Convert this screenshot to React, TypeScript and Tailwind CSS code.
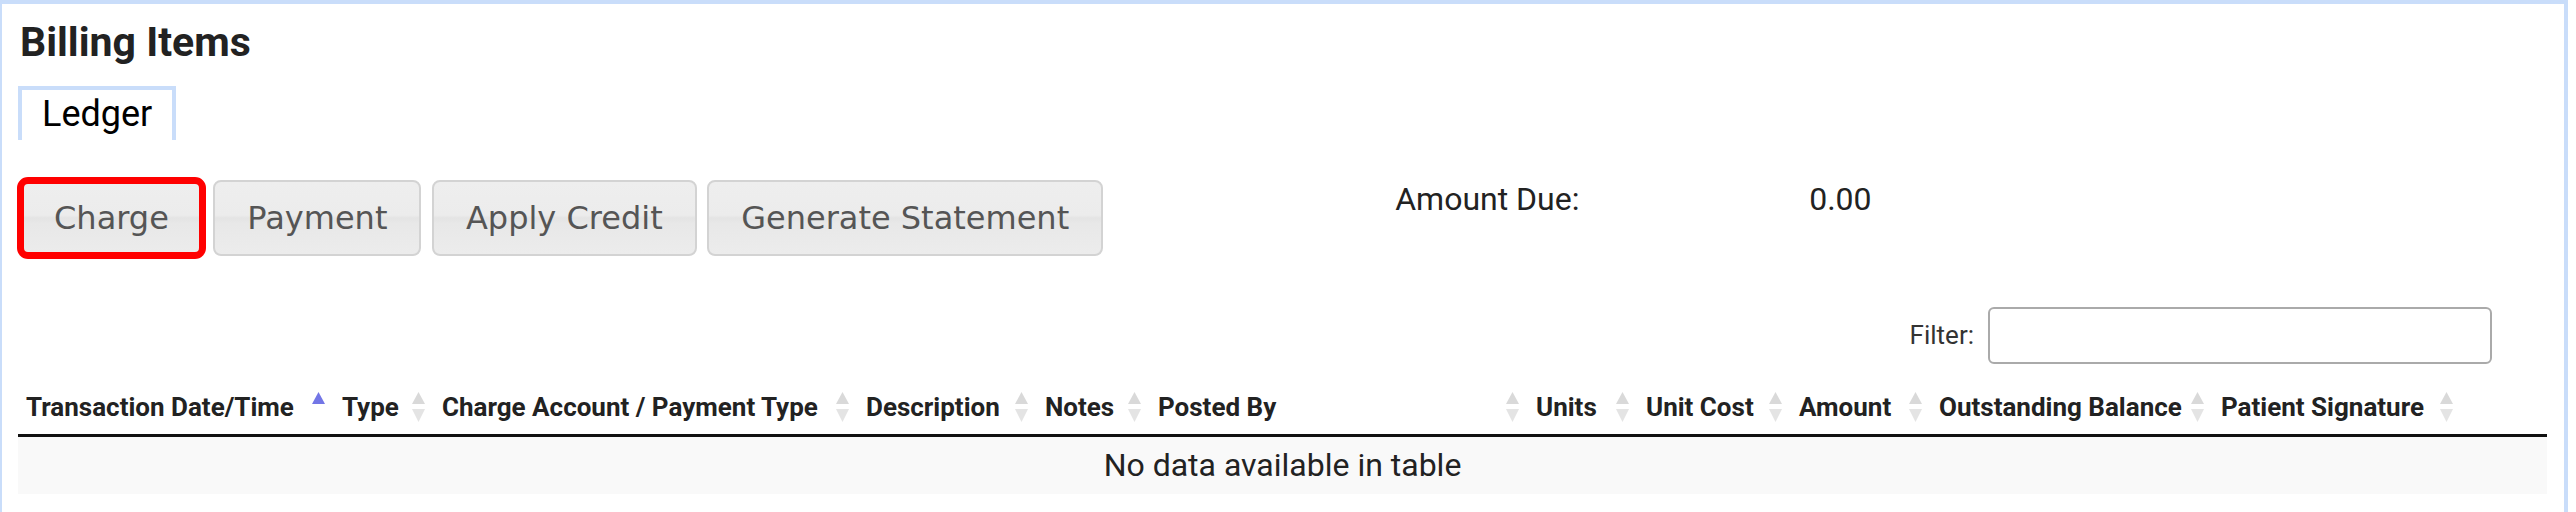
import React from "react";

type Column = {
  label: string;
  width: string;
  sort?: "asc" | "both";
};

const columns: Column[] = [
  { label: "Transaction Date/Time", width: "w-[316px]", sort: "asc" },
  { label: "Type", width: "w-[100px]", sort: "both" },
  { label: "Charge Account / Payment Type", width: "w-[424px]", sort: "both" },
  { label: "Description", width: "w-[179px]", sort: "both" },
  { label: "Notes", width: "w-[113px]", sort: "both" },
  { label: "Posted By", width: "w-[378px]", sort: "both" },
  { label: "Units", width: "w-[110px]", sort: "both" },
  { label: "Unit Cost", width: "w-[153px]", sort: "both" },
  { label: "Amount", width: "w-[140px]", sort: "both" },
  { label: "Outstanding Balance", width: "w-[282px]", sort: "both" },
  { label: "Patient Signature", width: "w-[249px]", sort: "both" },
  { label: "", width: "w-[85px]" },
];

const buttons = ["Charge", "Payment", "Apply Credit", "Generate Statement"];

const SortIcon = ({ dir }: { dir: "asc" | "both" }) => (
  <svg
    width="13"
    height="30"
    viewBox="0 0 13 30"
    className="absolute right-[9px] top-[20px]"
  >
    <path d="M6.5 0 L13 12 L0 12 Z" fill={dir === "asc" ? "#7376e6" : "#d9d9d9"} />
    {dir === "both" && <path d="M0 17 L13 17 L6.5 30 Z" fill="#e4e4e4" />}
  </svg>
);

const App = () => {
  return (
    <div className="w-[2568px] h-[512px] overflow-hidden bg-white border-t-4 border-l-2 border-r-4 border-[#c9ddfa] font-['Roboto',sans-serif] text-[#222]">
      <div className="pl-[16px] pr-[17px]">
        <h1 className="mt-[15px] ml-[2px] text-[41px] leading-[46px] font-bold">
          Billing Items
        </h1>

        <div className="mt-[21px] flex">
          <div className="border-t-4 border-x-4 border-[#c9ddfa] px-[20px] pt-[4px] pb-[6px] text-[36px] leading-[40px] text-black">
            Ledger
          </div>
        </div>

        <div className="mt-[40px] flex items-start">
          <div className="flex gap-[10.5px] ml-[2px]">
            {buttons.map((b) => (
              <button
                key={b}
                className={
                  "h-[76px] px-[32px] border-2 border-[#d3d3d3] rounded-[8px] bg-[linear-gradient(to_bottom,#eeeeee_0%,#ececec_46%,#e4e4e4_50%,#e8e8e8_58%,#ececec_100%)] font-['DejaVu_Sans',sans-serif] text-[32px] leading-none text-[#555] " +
                  (b === "Charge"
                    ? "outline-[7px] outline-solid outline-[#ff0000] outline-offset-[-4px]"
                    : "")
                }
              >
                {b}
              </button>
            ))}
          </div>
          <div className="ml-[292px] flex text-[32px] leading-[38px]">
            <span className="w-[414px]">Amount Due:</span>
            <span>0.00</span>
          </div>
        </div>

        <div className="mt-[51px] mr-[55px] flex justify-end items-center">
          <label className="text-[26px] mr-[14px] text-[#333]">Filter:</label>
          <input
            type="text"
            className="w-[504px] h-[57px] border-2 border-[#aaa] rounded-[6px] bg-white"
          />
        </div>

        <table className="mt-[8px] w-[2529px] table-fixed border-collapse">
          <thead>
            <tr>
              {columns.map((c, i) => (
                <th
                  key={i}
                  className={`${c.width} relative text-left font-bold text-[26px] leading-[30px] pt-[20px] pb-[12px] pl-[8px] pr-[24px] border-b-[3px] border-[#111] whitespace-nowrap`}
                >
                  {c.label}
                  {c.sort && <SortIcon dir={c.sort} />}
                </th>
              ))}
            </tr>
          </thead>
          <tbody>
            <tr>
              <td
                colSpan={12}
                className="h-[58px] bg-[#f9f9f9] text-center text-[32px] leading-[38px]"
              >
                No data available in table
              </td>
            </tr>
          </tbody>
        </table>
      </div>
    </div>
  );
};

export default App;
